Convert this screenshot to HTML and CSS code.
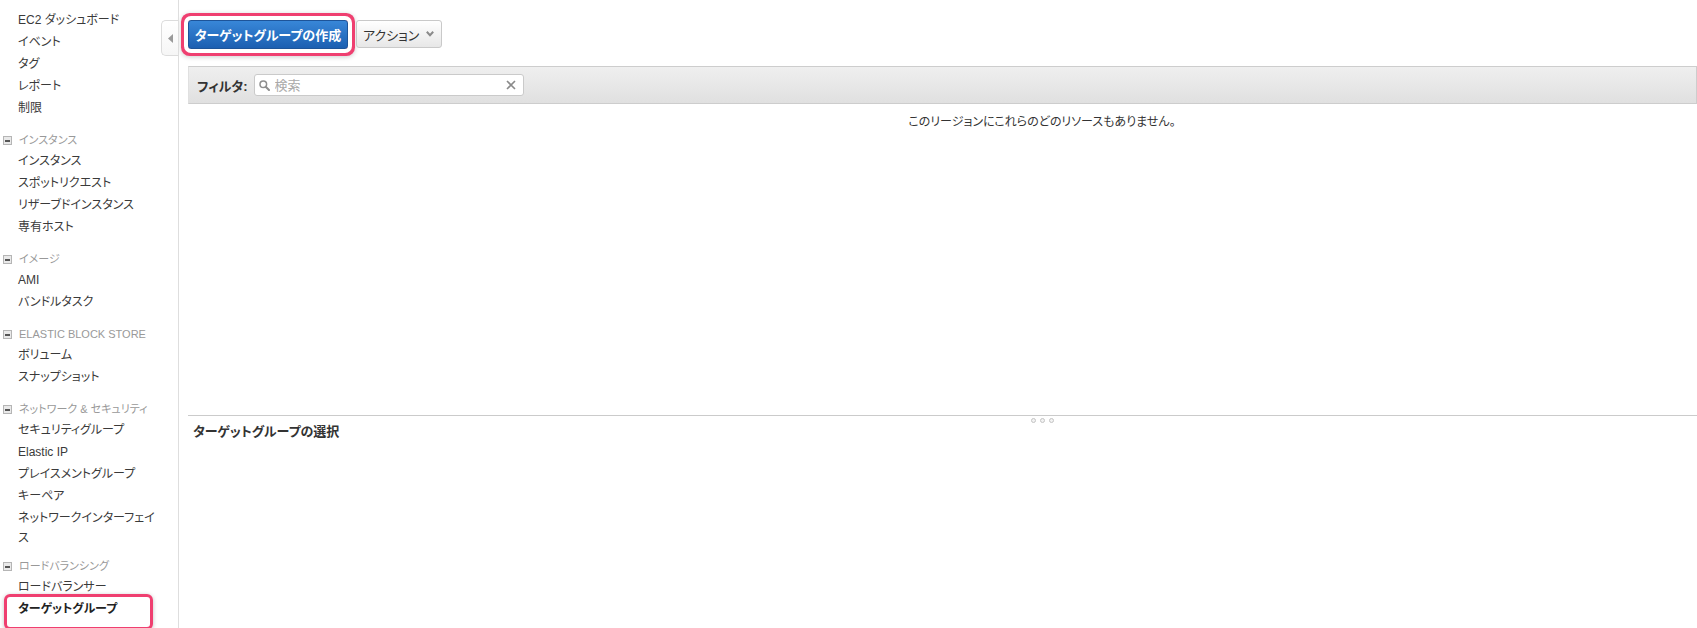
FILE: index.html
```html
<!DOCTYPE html>
<html lang="ja">
<head>
<meta charset="utf-8">
<title>ターゲットグループ | EC2 Management Console</title>
<link rel="stylesheet" href="styles.css">
</head>
<body>
<div class="console">
  <nav class="sidebar">
    <button class="collapse-tab" aria-label="ナビゲーションを閉じる">
      <svg width="5" height="9" viewBox="0 0 5 9"><path d="M5 0 L0 4.5 L5 9 Z" fill="#9a9a9a"/></svg>
    </button>

    <ul class="nav-list">
      <li class="nav-item">EC2 ダッシュボード</li>
      <li class="nav-item">イベント</li>
      <li class="nav-item">タグ</li>
      <li class="nav-item">レポート</li>
      <li class="nav-item">制限</li>
    </ul>

    <section class="nav-section">
      <div class="nav-heading"><span class="toggle"></span>インスタンス</div>
      <ul class="nav-list">
        <li class="nav-item">インスタンス</li>
        <li class="nav-item">スポットリクエスト</li>
        <li class="nav-item">リザーブドインスタンス</li>
        <li class="nav-item">専有ホスト</li>
      </ul>
    </section>

    <section class="nav-section">
      <div class="nav-heading"><span class="toggle"></span>イメージ</div>
      <ul class="nav-list">
        <li class="nav-item">AMI</li>
        <li class="nav-item">バンドルタスク</li>
      </ul>
    </section>

    <section class="nav-section">
      <div class="nav-heading"><span class="toggle"></span>ELASTIC BLOCK STORE</div>
      <ul class="nav-list">
        <li class="nav-item">ボリューム</li>
        <li class="nav-item">スナップショット</li>
      </ul>
    </section>

    <section class="nav-section">
      <div class="nav-heading"><span class="toggle"></span>ネットワーク &amp; セキュリティ</div>
      <ul class="nav-list">
        <li class="nav-item">セキュリティグループ</li>
        <li class="nav-item">Elastic IP</li>
        <li class="nav-item">プレイスメントグループ</li>
        <li class="nav-item">キーペア</li>
        <li class="nav-item">ネットワークインターフェイス</li>
      </ul>
    </section>

    <section class="nav-section nav-section-last">
      <div class="nav-heading"><span class="toggle"></span>ロードバランシング</div>
      <ul class="nav-list">
        <li class="nav-item">ロードバランサー</li>
        <li class="nav-item nav-item-current">ターゲットグループ</li>
      </ul>
    </section>
  </nav>

  <main class="main">
    <div class="toolbar">
      <button class="btn btn-primary">ターゲットグループの作成</button>
      <button class="btn btn-menu">アクション
        <svg class="caret" width="8" height="6" viewBox="0 0 8 6"><path d="M0.8 0.8 L4 4.2 L7.2 0.8" fill="none" stroke="#8a8a8a" stroke-width="2"/></svg>
      </button>
    </div>

    <div class="filter-bar">
      <label class="filter-label" for="search">フィルタ:</label>
      <div class="search">
        <svg class="search-icon" width="11" height="11" viewBox="0 0 11 11"><circle cx="4.3" cy="4.3" r="3.3" fill="none" stroke="#8e8e8e" stroke-width="1.5"/><path d="M6.7 6.7 L10 10" stroke="#8e8e8e" stroke-width="2" stroke-linecap="round"/></svg>
        <input id="search" class="search-input" type="text" placeholder="検索">
        <svg class="search-clear" width="10" height="10" viewBox="0 0 10 10"><path d="M1 1 L9 9 M9 1 L1 9" stroke="#8a8a8a" stroke-width="1.6"/></svg>
      </div>
    </div>

    <div class="list-area">
      <p class="empty-message">このリージョンにこれらのどのリソースもありません。</p>
    </div>

    <div class="split-handle">
      <span class="grip"><i></i><i></i><i></i></span>
    </div>

    <h3 class="details-title">ターゲットグループの選択</h3>
  </main>
</div>
</body>
</html>
```

FILE: styles.css
```css
* {
  box-sizing: border-box;
}

html, body {
  margin: 0;
  padding: 0;
  background: #fff;
}

body {
  font-family: "Liberation Sans", "Noto Sans CJK JP", sans-serif;
  font-feature-settings: "palt";
  font-size: 13px;
  color: #444;
  overflow: hidden;
}

.console {
  display: flex;
  height: 628px;
}

/* ---------- left navigation ---------- */

.sidebar {
  position: relative;
  flex: 0 0 179px;
  border-right: 1px solid #dedede;
  padding-top: 9px;
}

.collapse-tab {
  position: absolute;
  top: 20px;
  right: -1px;
  width: 18px;
  height: 36px;
  padding: 0;
  border: 1px solid #dcdcdc;
  border-right: 1px solid #dedede;
  border-radius: 5px 0 0 5px;
  background: linear-gradient(#fff, #f6f6f6);
  display: flex;
  align-items: center;
  justify-content: center;
  cursor: pointer;
}

.nav-list {
  list-style: none;
  margin: 0;
  padding: 0 17px 0 18px;
}

.nav-item {
  position: relative;
  padding: 1px 0;
  line-height: 20px;
  font-size: 12px;
  color: #3a3a3a;
  cursor: pointer;
}

.nav-item-current {
  font-weight: bold;
  color: #222;
}

/* highlight ring round the current page */
.nav-item-current::after {
  content: "";
  position: absolute;
  left: -14px;
  top: -4px;
  width: 143px;
  height: 30px;
  border: 3px solid #ef3f70;
  border-radius: 6px;
  box-shadow: 0 1px 4px rgba(0, 0, 0, 0.25);
}

.nav-section {
  margin-top: 11px;
}

.nav-section-last {
  margin-top: 7px;
}

.nav-heading {
  display: flex;
  align-items: center;
  gap: 7px;
  padding-left: 3px;
  line-height: 20px;
  font-size: 11px;
  color: #999;
}

.toggle {
  position: relative;
  flex: 0 0 9px;
  width: 9px;
  height: 9px;
  border: 1px solid #b5b5b5;
  background: #e9e9e9;
}

.toggle::after {
  content: "";
  position: absolute;
  left: 1px;
  top: 3px;
  width: 5px;
  height: 2px;
  background: #555;
}

/* ---------- main panel ---------- */

.main {
  flex: 1;
  min-width: 0;
  padding-left: 9px;
}

.toolbar {
  display: flex;
  align-items: flex-start;
  gap: 8px;
  padding-top: 20px;
}

.btn {
  height: 29px;
  border-radius: 3px;
  font-family: inherit;
  font-feature-settings: "palt";
  font-size: 13px;
  cursor: pointer;
}

.btn-primary {
  width: 160px;
  padding: 0;
  border: 1px solid #1d5499;
  background: linear-gradient(#3887d8, #1c5fb1);
  color: #fff;
  font-weight: bold;
  /* pink ring drawn round the button */
  box-shadow: 0 0 0 4px #fff, 0 0 0 7px #ef3f70, 0 1px 5px 7px rgba(0, 0, 0, 0.2);
}

.btn-menu {
  display: flex;
  align-items: center;
  gap: 7px;
  height: 28px;
  padding: 0 7px 0 6px;
  border: 1px solid #c9c9c9;
  background: linear-gradient(#fff, #e7e7e7);
  color: #333;
}

.caret {
  display: block;
}

.filter-bar {
  display: flex;
  align-items: center;
  gap: 6px;
  height: 38px;
  margin-top: 17px;
  padding-left: 8px;
  border: 1px solid #cdcdcd;
  border-left-color: #e0e0e0;
  background: linear-gradient(#efefef, #e0e0e0);
}

.filter-label {
  color: #333;
  font-weight: bold;
  font-size: 13px;
}

.search {
  position: relative;
  display: flex;
  align-items: center;
  width: 270px;
  height: 22px;
  border: 1px solid #cacaca;
  border-radius: 3px;
  background: #fff;
}

.search-icon {
  flex: 0 0 auto;
  margin-left: 4px;
}

.search-input {
  flex: 1;
  min-width: 0;
  height: 20px;
  border: 0;
  padding: 0 0 0 5px;
  outline: none;
  background: transparent;
  font-family: inherit;
  font-size: 13px;
  color: #333;
}

.search-input::placeholder {
  color: #a9a9a9;
}

.search-clear {
  flex: 0 0 auto;
  margin-right: 7px;
}

.list-area {
  height: 311px;
  padding-top: 9px;
}

.empty-message {
  margin: 0;
  padding-left: 199px;
  text-align: center;
  font-size: 12px;
  line-height: 18px;
  color: #333;
}

.split-handle {
  display: flex;
  justify-content: center;
  height: 8px;
  padding-left: 199px;
  border-top: 1px solid #cbcbcb;
}

.grip {
  display: flex;
  gap: 4px;
  padding-top: 2px;
}

.grip i {
  width: 5px;
  height: 5px;
  border-radius: 50%;
  border: 1px solid #c4c4c4;
  background: #f2f2f2;
}

.details-title {
  margin: 0;
  padding-left: 5px;
  font-size: 13px;
  line-height: 18px;
  font-weight: bold;
  color: #333;
}
```
